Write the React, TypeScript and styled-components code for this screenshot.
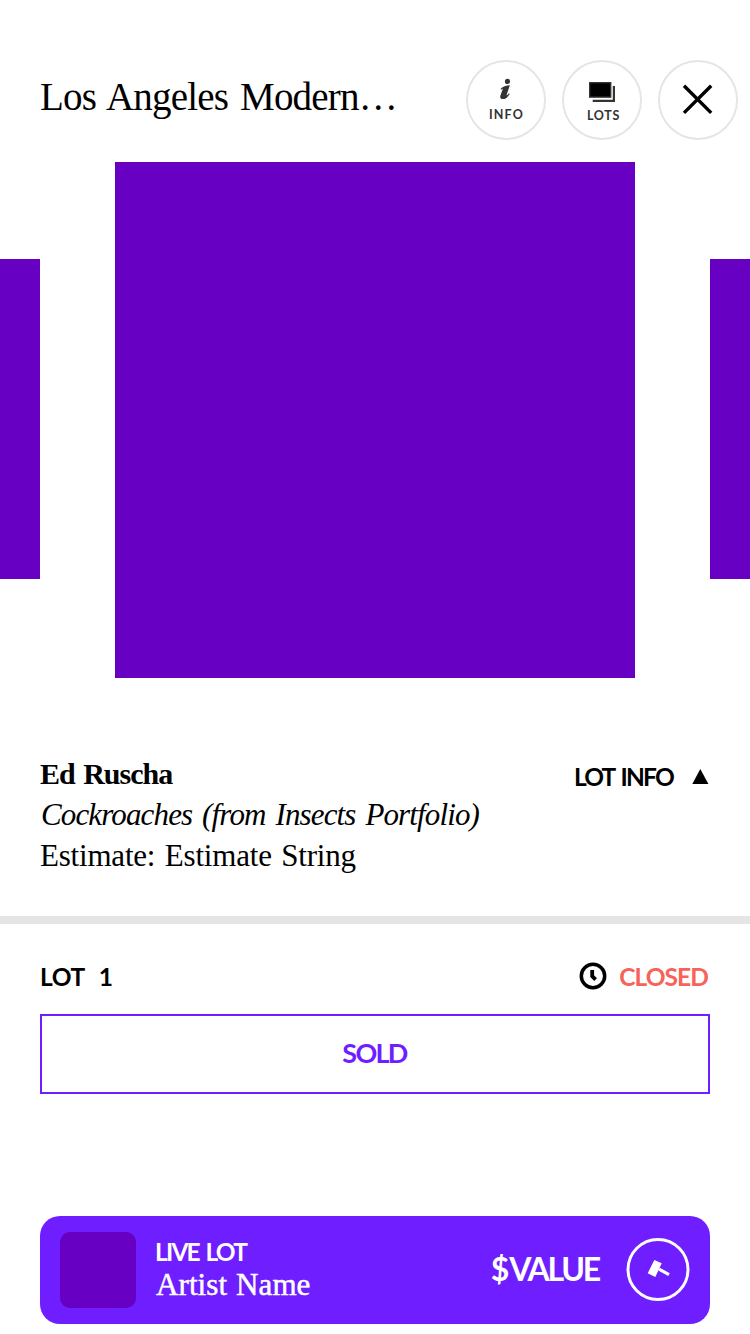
import React from 'react';
import styled, { createGlobalStyle } from 'styled-components';

const serif = '"Liberation Serif", "Times New Roman", serif';
const sans = 'Lato, "Open Sans", sans-serif';
const violet = '#6e1eff';
const artwork = '#6700c3';

const GlobalStyle = createGlobalStyle`
  * { box-sizing: border-box; }
  body { margin: 0; background: #fff; color: #000; }
`;

const Screen = styled.main`
  display: flex;
  flex-direction: column;
  width: 750px;
  height: 1334px;
  overflow: hidden;
  padding-top: 60px;
  background: #fff;
`;

const SansText = styled.span<{ $size: number; $tracking: number; $color?: string }>`
  font: 700 ${(p) => p.$size}px ${sans};
  line-height: ${(p) => Math.round(p.$size * 1.28)}px;
  letter-spacing: ${(p) => p.$tracking}px;
  word-spacing: 2.5px;
  color: ${(p) => p.$color ?? 'inherit'};
  white-space: pre;
`;

const Header = styled.header`
  display: flex;
  justify-content: space-between;
  align-items: center;
  height: 80px;
  padding: 0 12px 0 40px;
`;

const Title = styled.h1`
  margin: 0;
  padding-bottom: 6px;
  font: 400 39px/48px ${serif};
  letter-spacing: -0.8px;
  word-spacing: 3px;
  white-space: nowrap;
`;

const Actions = styled.nav`
  display: flex;
  gap: 16px;
`;

const RoundButton = styled.button<{ $top: number }>`
  display: flex;
  flex-direction: column;
  align-items: center;
  width: 80px;
  height: 80px;
  padding: ${(p) => p.$top}px 0 0;
  border: 2px solid #e5e5e5;
  border-radius: 50%;
  background: #fff;
  color: #333;
`;

const ButtonLabel = styled.span<{ $tracking: number; $indent: number; $gap: number }>`
  margin-top: ${(p) => p.$gap}px;
  padding-left: ${(p) => p.$indent}px;
  font: 700 12.5px/14px ${sans};
  letter-spacing: ${(p) => p.$tracking}px;
`;

const Carousel = styled.section`
  display: flex;
  justify-content: space-between;
  align-items: center;
  height: 516px;
  margin-top: 22px;
`;

const MainArtwork = styled.div`
  width: 520px;
  height: 516px;
  background: ${artwork};
`;

const SideArtwork = styled.div`
  width: 40px;
  height: 320px;
  margin-bottom: 2px;
  background: ${artwork};
`;

const LotDetails = styled.section`
  display: flex;
  justify-content: space-between;
  align-items: flex-start;
  height: 238px;
  padding: 75px 41px 0 40px;
`;

const DetailLine = styled.div<{ $weight?: number; $italic?: boolean; $size?: number; $tracking: number; $wordGap: number }>`
  padding-left: ${(p) => (p.$italic ? 1 : 0)}px;
  font-family: ${serif};
  font-size: ${(p) => p.$size ?? 31}px;
  font-weight: ${(p) => p.$weight ?? 400};
  font-style: ${(p) => (p.$italic ? 'italic' : 'normal')};
  line-height: 41px;
  letter-spacing: ${(p) => p.$tracking}px;
  word-spacing: ${(p) => p.$wordGap}px;
  white-space: nowrap;
`;

const LotInfoToggle = styled.div`
  display: flex;
  align-items: center;
  gap: 19px;
  padding-top: 8px;
`;

const Divider = styled.hr`
  width: 100%;
  height: 8px;
  margin: 0;
  border: 0;
  background: #e5e5e5;
  flex: none;
`;

const StatusRow = styled.div`
  display: flex;
  justify-content: space-between;
  align-items: center;
  height: 32px;
  margin: 36px 42px 0 40px;
`;

const LotNumber = styled.div`
  display: flex;
  gap: 14px;
`;

const ClosedStatus = styled.div`
  display: flex;
  align-items: center;
  gap: 12px;
`;

const SoldButton = styled.button`
  display: flex;
  justify-content: center;
  align-items: center;
  height: 80px;
  margin: 22px 40px 0;
  padding: 0 1px 3px 0;
  border: 2px solid ${violet};
  background: #fff;
  color: ${violet};
`;

const LiveBar = styled.section`
  display: flex;
  align-items: center;
  height: 108px;
  margin: 122px 40px 0;
  padding: 0 20px;
  border-radius: 20px;
  background: ${violet};
  color: #fff;
`;

const Thumbnail = styled.div`
  width: 76px;
  height: 76px;
  border-radius: 10px;
  background: ${artwork};
`;

const LiveText = styled.div`
  display: flex;
  flex-direction: column;
  flex: 1;
  margin-left: 19px;
  padding-bottom: 3px;
`;

const LiveArtist = styled.span`
  padding-left: 1px;
  font: 400 31px/35px ${serif};
  letter-spacing: 0.1px;
  word-spacing: 1px;
  -webkit-text-stroke: 0.5px #fff;
`;

const Price = styled.div`
  display: flex;
  gap: 2px;
  margin-right: 27px;
  padding-bottom: 3px;
`;

export default function App() {
  return (
    <Screen>
      <GlobalStyle />
      <Header>
        <Title>Los Angeles Modern…</Title>
        <Actions>
          <RoundButton $top={16}>
            <svg width="12" height="22" viewBox="0 0 12 22" fill="#333">
              <circle cx="7.5" cy="3.4" r="2.6" />
              <path d="M.5 10.9C3 8.4 6 7.4 9.9 7.2L6.7 16.6C6.3 17.9 7.2 17.4 8.9 15.2L9.7 15.9C7.6 19.4 5.3 21.1 2.9 21.1C.4 21.1 -.2 19.4 .5 17.3L2.6 11.5C3 10.2 2.5 10.5 1.2 11.8Z" />
            </svg>
            <ButtonLabel $tracking={1.2} $indent={1} $gap={8}>INFO</ButtonLabel>
          </RoundButton>
          <RoundButton $top={20}>
            <svg width="28" height="21" viewBox="0 0 28 21">
              <rect x="1.7" y=".7" width="21" height="14.4" fill="#000" stroke="#333" strokeWidth="1.4" />
              <path d="M25.9 4V18.9H4.7" fill="none" stroke="#333" strokeWidth="2.2" />
            </svg>
            <ButtonLabel $tracking={0.7} $indent={3} $gap={6}>LOTS</ButtonLabel>
          </RoundButton>
          <RoundButton $top={22}>
            <svg width="32" height="32" viewBox="0 0 32 32" fill="none" stroke="#000" strokeWidth="3.4">
              <path d="M2 1.7L29.2 28.9M29.2 1.7L2 28.9" />
            </svg>
          </RoundButton>
        </Actions>
      </Header>

      <Carousel>
        <SideArtwork />
        <MainArtwork />
        <SideArtwork />
      </Carousel>

      <LotDetails>
        <div>
          <DetailLine $weight={700} $size={30} $tracking={-1} $wordGap={2}>Ed Ruscha</DetailLine>
          <DetailLine $italic $tracking={-0.86} $wordGap={3}>Cockroaches (from Insects Portfolio)</DetailLine>
          <DetailLine $tracking={-0.2} $wordGap={2}>Estimate: Estimate String</DetailLine>
        </div>
        <LotInfoToggle>
          <SansText $size={24.5} $tracking={-1.78}>LOT INFO</SansText>
          <svg width="17" height="16" viewBox="0 0 17 16">
            <path d="M8.3 0L16.4 15H.3Z" />
          </svg>
        </LotInfoToggle>
      </LotDetails>

      <Divider />

      <StatusRow>
        <LotNumber>
          <SansText $size={24.5} $tracking={-0.4}>LOT</SansText>
          <SansText $size={24.5} $tracking={0}>1</SansText>
        </LotNumber>
        <ClosedStatus>
          <svg width="28" height="28" viewBox="0 0 28 28" fill="none" stroke="#000">
            <circle cx="14" cy="14" r="11.7" strokeWidth="3.5" />
            <path d="M13.2 8V14.2L16.6 17.6" strokeWidth="3.8" />
          </svg>
          <SansText $size={24.5} $tracking={-0.9} $color="#f7625a">CLOSED</SansText>
        </ClosedStatus>
      </StatusRow>

      <SoldButton>
        <SansText $size={27} $tracking={-1.7}>SOLD</SansText>
      </SoldButton>

      <LiveBar>
        <Thumbnail />
        <LiveText>
          <SansText $size={24.5} $tracking={-1.8}>LIVE LOT</SansText>
          <LiveArtist>Artist Name</LiveArtist>
        </LiveText>
        <Price>
          <SansText $size={32} $tracking={-2}>$</SansText>
          <SansText $size={32} $tracking={-2.2}>VALUE</SansText>
        </Price>
        <svg width="64" height="64" viewBox="0 0 64 64">
          <circle cx="32" cy="31.5" r="30" fill="none" stroke="#fff" strokeWidth="3" />
          <path d="M28.3 22L35.7 25.3L29.3 39L21.7 35.3Z" fill="#fff" />
          <path d="M33 31.2L43 36.6" fill="none" stroke="#fff" strokeWidth="3.2" />
        </svg>
      </LiveBar>
    </Screen>
  );
}
